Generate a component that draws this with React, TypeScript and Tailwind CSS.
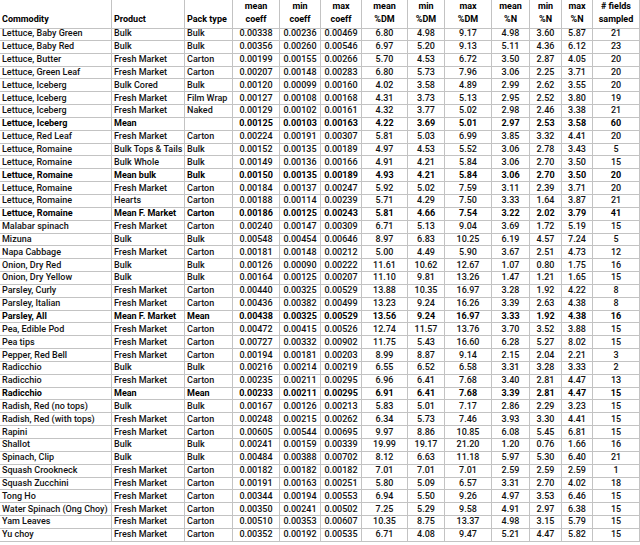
import React from 'react';

type Row = {
  commodity: string;
  product: string;
  pack: string;
  values: string[];
  bold?: boolean;
};

const columns = [
  { top: '', bottom: 'Commodity', left: true },
  { top: '', bottom: 'Product', left: true },
  { top: '', bottom: 'Pack type', left: true },
  { top: 'mean', bottom: 'coeff' },
  { top: 'min', bottom: 'coeff' },
  { top: 'max', bottom: 'coeff' },
  { top: 'mean', bottom: '%DM' },
  { top: 'min', bottom: '%DM' },
  { top: 'max', bottom: '%DM' },
  { top: 'mean', bottom: '%N' },
  { top: 'min', bottom: '%N' },
  { top: 'max', bottom: '%N' },
  { top: '# fields', bottom: 'sampled' },
];

const r = (
  commodity: string,
  product: string,
  pack: string,
  line: string,
  bold = false
): Row => ({ commodity, product, pack, values: line.split(' '), bold });

const rows: Row[] = [
  r('Lettuce, Baby Green', 'Bulk', 'Bulk', '0.00338 0.00236 0.00469 6.80 4.98 9.17 4.98 3.60 5.87 21'),
  r('Lettuce, Baby Red', 'Bulk', 'Bulk', '0.00356 0.00260 0.00546 6.97 5.20 9.13 5.11 4.36 6.12 23'),
  r('Lettuce, Butter', 'Fresh Market', 'Carton', '0.00199 0.00155 0.00266 5.70 4.53 6.72 3.50 2.87 4.05 20'),
  r('Lettuce, Green Leaf', 'Fresh Market', 'Carton', '0.00207 0.00148 0.00283 6.80 5.73 7.96 3.06 2.25 3.71 20'),
  r('Lettuce, Iceberg', 'Bulk Cored', 'Bulk', '0.00120 0.00099 0.00160 4.02 3.58 4.89 2.99 2.62 3.55 20'),
  r('Lettuce, Iceberg', 'Fresh Market', 'Film Wrap', '0.00127 0.00108 0.00168 4.31 3.73 5.13 2.95 2.52 3.80 19'),
  r('Lettuce, Iceberg', 'Fresh Market', 'Naked', '0.00129 0.00102 0.00161 4.32 3.77 5.02 2.98 2.46 3.38 21'),
  r('Lettuce, Iceberg', 'Mean', '', '0.00125 0.00103 0.00163 4.22 3.69 5.01 2.97 2.53 3.58 60', true),
  r('Lettuce, Red Leaf', 'Fresh Market', 'Carton', '0.00224 0.00191 0.00307 5.81 5.03 6.99 3.85 3.32 4.41 20'),
  r('Lettuce, Romaine', 'Bulk Tops & Tails', 'Bulk', '0.00152 0.00135 0.00189 4.97 4.53 5.52 3.06 2.78 3.43 5'),
  r('Lettuce, Romaine', 'Bulk Whole', 'Bulk', '0.00149 0.00136 0.00166 4.91 4.21 5.84 3.06 2.70 3.50 15'),
  r('Lettuce, Romaine', 'Mean bulk', 'Bulk', '0.00150 0.00135 0.00189 4.93 4.21 5.84 3.06 2.70 3.50 20', true),
  r('Lettuce, Romaine', 'Fresh Market', 'Carton', '0.00184 0.00137 0.00247 5.92 5.02 7.59 3.11 2.39 3.71 20'),
  r('Lettuce, Romaine', 'Hearts', 'Carton', '0.00188 0.00114 0.00239 5.71 4.29 7.50 3.33 1.64 3.87 21'),
  r('Lettuce, Romaine', 'Mean F. Market', 'Carton', '0.00186 0.00125 0.00243 5.81 4.66 7.54 3.22 2.02 3.79 41', true),
  r('Malabar spinach', 'Fresh Market', 'Carton', '0.00240 0.00147 0.00309 6.71 5.13 9.04 3.69 1.72 5.19 15'),
  r('Mizuna', 'Bulk', 'Bulk', '0.00548 0.00454 0.00646 8.97 6.83 10.25 6.19 4.57 7.24 5'),
  r('Napa Cabbage', 'Fresh Market', 'Carton', '0.00181 0.00148 0.00212 5.00 4.49 5.90 3.67 2.51 4.73 12'),
  r('Onion, Dry Red', 'Bulk', 'Bulk', '0.00126 0.00090 0.00222 11.61 10.62 12.67 1.07 0.80 1.75 16'),
  r('Onion, Dry Yellow', 'Bulk', 'Bulk', '0.00164 0.00125 0.00207 11.10 9.81 13.26 1.47 1.21 1.65 15'),
  r('Parsley, Curly', 'Fresh Market', 'Carton', '0.00440 0.00325 0.00529 13.88 10.35 16.97 3.28 1.92 4.22 8'),
  r('Parsley, Italian', 'Fresh Market', 'Carton', '0.00436 0.00382 0.00499 13.23 9.24 16.26 3.39 2.63 4.38 8'),
  r('Parsley, All', 'Mean F. Market', 'Mean', '0.00438 0.00325 0.00529 13.56 9.24 16.97 3.33 1.92 4.38 16', true),
  r('Pea, Edible Pod', 'Fresh Market', 'Carton', '0.00472 0.00415 0.00526 12.74 11.57 13.76 3.70 3.52 3.88 15'),
  r('Pea tips', 'Fresh Market', 'Carton', '0.00727 0.00332 0.00902 11.75 5.43 16.60 6.28 5.27 8.02 15'),
  r('Pepper, Red Bell', 'Fresh Market', 'Carton', '0.00194 0.00181 0.00203 8.99 8.87 9.14 2.15 2.04 2.21 3'),
  r('Radicchio', 'Bulk', 'Bulk', '0.00216 0.00214 0.00219 6.55 6.52 6.58 3.31 3.28 3.33 2'),
  r('Radicchio', 'Fresh Market', 'Carton', '0.00235 0.00211 0.00295 6.96 6.41 7.68 3.40 2.81 4.47 13'),
  r('Radicchio', 'Mean', 'Mean', '0.00233 0.00211 0.00295 6.91 6.41 7.68 3.39 2.81 4.47 15', true),
  r('Radish, Red (no tops)', 'Bulk', 'Bulk', '0.00167 0.00126 0.00213 5.83 5.01 7.17 2.86 2.29 3.23 15'),
  r('Radish, Red (with tops)', 'Fresh Market', 'Carton', '0.00248 0.00215 0.00262 6.34 5.73 7.46 3.93 3.30 4.41 15'),
  r('Rapini', 'Fresh Market', 'Carton', '0.00605 0.00544 0.00695 9.97 8.86 10.85 6.08 5.45 6.81 15'),
  r('Shallot', 'Bulk', 'Bulk', '0.00241 0.00159 0.00339 19.99 19.17 21.20 1.20 0.76 1.66 16'),
  r('Spinach, Clip', 'Bulk', 'Bulk', '0.00484 0.00388 0.00702 8.12 6.63 11.18 5.97 5.30 6.40 21'),
  r('Squash Crookneck', 'Fresh Market', 'Carton', '0.00182 0.00182 0.00182 7.01 7.01 7.01 2.59 2.59 2.59 1'),
  r('Squash Zucchini', 'Fresh Market', 'Carton', '0.00191 0.00163 0.00251 5.80 5.09 6.57 3.31 2.70 4.02 18'),
  r('Tong Ho', 'Fresh Market', 'Carton', '0.00344 0.00194 0.00553 6.94 5.50 9.26 4.97 3.53 6.46 15'),
  r('Water Spinach (Ong Choy)', 'Fresh Market', 'Carton', '0.00350 0.00241 0.00502 7.25 5.29 9.58 4.91 2.97 6.38 15'),
  r('Yam Leaves', 'Fresh Market', 'Carton', '0.00510 0.00353 0.00607 10.35 8.75 13.37 4.98 3.15 5.79 15'),
  r('Yu choy', 'Fresh Market', 'Carton', '0.00352 0.00192 0.00535 6.71 4.08 9.47 5.21 4.47 5.82 15'),
];

const gridCols =
  'grid grid-cols-[112px_73px_48px_47px_41px_41px_46px_37px_47px_38px_32px_31px_47px]';

export default function App() {
  return (
    <div
      className="w-[640px] h-[545px] overflow-hidden bg-white text-[#111111] text-[9px]"
      style={{ fontFamily: 'Roboto, "Liberation Sans", Arial, sans-serif' }}
    >
      {/* header */}
      <div className={`${gridCols} h-[28px] font-bold text-black`}>
        {columns.map((col, i) => (
          <div
            key={i}
            className={`flex flex-col justify-end pb-[2px] leading-[13px] border-r border-b border-[#c3c3c3] ${
              col.left ? 'items-start pl-[2px]' : 'items-center'
            }`}
          >
            {col.top && <span>{col.top}</span>}
            <span>{col.bottom}</span>
          </div>
        ))}
      </div>

      {/* body */}
      {rows.map((row, i) => (
        <div
          key={i}
          className={`${gridCols} h-[12.85px] ${row.bold ? 'font-bold text-black' : 'font-medium'}`}
        >
          {[row.commodity, row.product, row.pack].map((text, j) => (
            <div
              key={j}
              className="flex items-center pl-[2px] whitespace-nowrap overflow-hidden border-r border-b border-[#c3c3c3] leading-none"
            >
              {text}
            </div>
          ))}
          {row.values.map((v, j) => (
            <div
              key={j}
              className="flex items-center justify-center whitespace-nowrap border-r border-b border-[#c3c3c3] leading-none"
            >
              {v}
            </div>
          ))}
        </div>
      ))}
    </div>
  );
}
